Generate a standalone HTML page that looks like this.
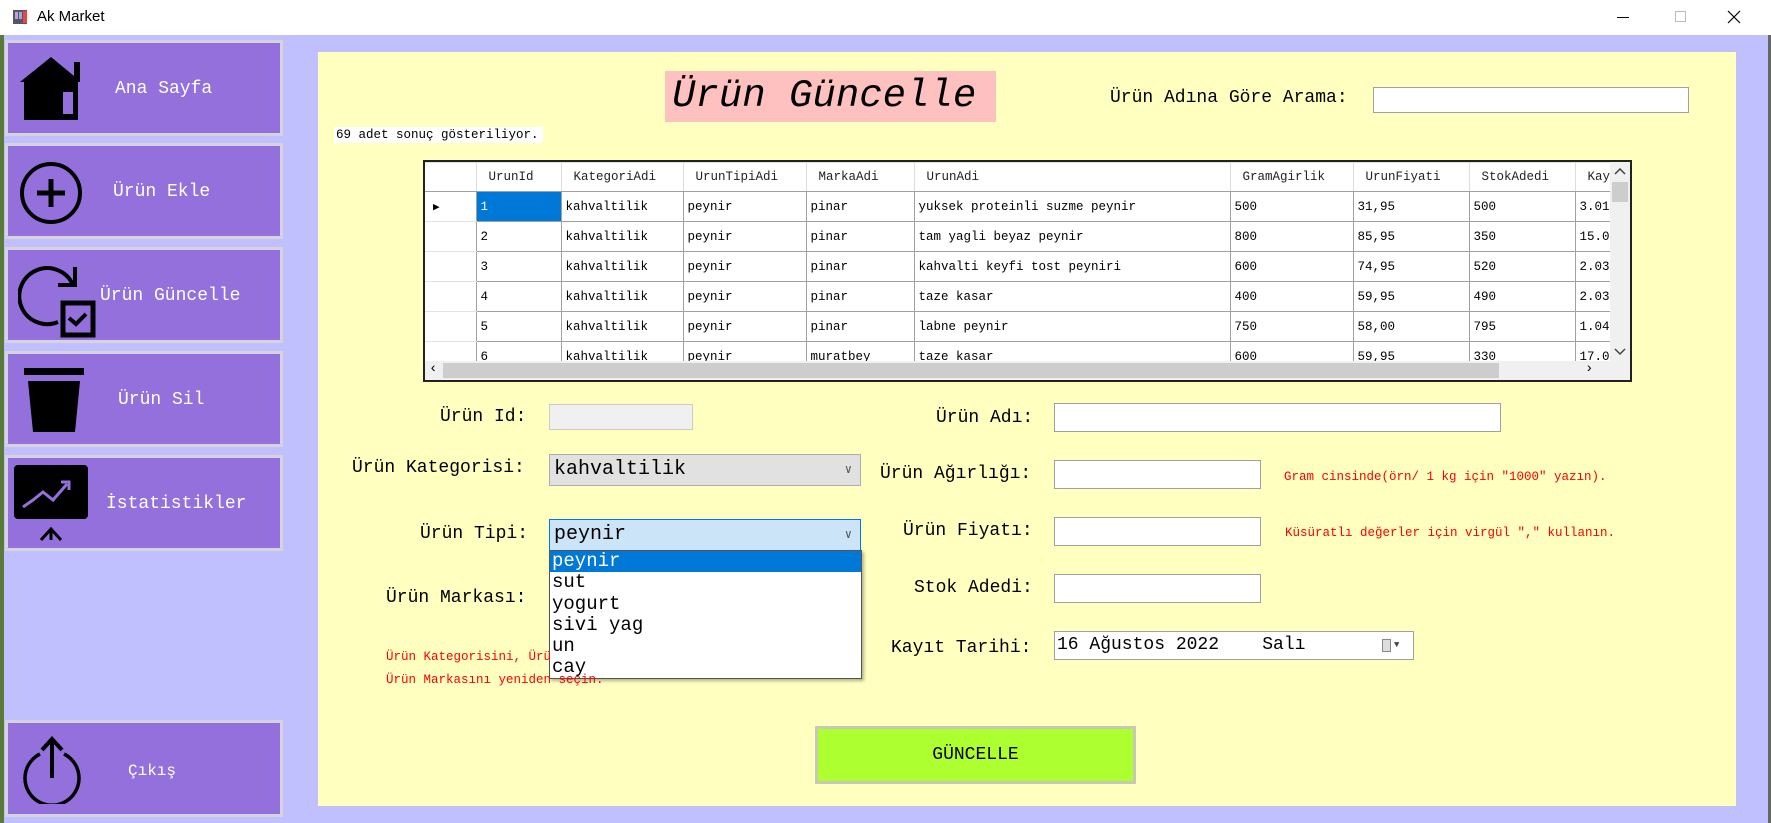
<!DOCTYPE html>
<html><head><meta charset="utf-8"><style>
*{box-sizing:border-box;margin:0;padding:0}
body{width:1771px;height:823px;overflow:hidden;background:#c0c0ff;font-family:"Liberation Mono",monospace;position:relative}
.a{position:absolute}
.tb{left:0;top:0;width:1771px;height:35px;background:#fff;font-family:"Liberation Sans",sans-serif;font-size:15px;color:#000}
.btn{position:absolute;left:5px;width:278px;height:96px;background:#9370db;border:3px solid #d6d3de}
.btn span{position:absolute;color:#fff;font-size:18px;white-space:nowrap;top:36px}
.panel{left:318px;top:52px;width:1418px;height:754px;background:#ffffc0}
.lbl{position:absolute;font-size:18px;color:#000;white-space:nowrap;line-height:22px}
.red{position:absolute;font-size:12.5px;color:#f00;white-space:nowrap;line-height:16px}
.inp{position:absolute;background:#fff;border:1px solid #a0a0a0}
table{border-collapse:collapse;font-size:12.5px;table-layout:fixed}
td{height:30px;border:1px solid #a0a0a0;padding-left:4px;white-space:nowrap;overflow:hidden;background:#fff}
th{height:29px;border:1px solid #ddd;border-bottom:1px solid #a0a0a0;font-weight:normal;text-align:left;padding-left:12px;white-space:nowrap;overflow:hidden;background:#fff;color:#222}
td.rh{border:none;border-bottom:1px solid #e3e3e3;background:#fff}
.dd div{height:21.3px;line-height:21px;font-size:19px;padding-left:2px}
</style></head><body>
<div class="a tb">
 <svg class="a" style="left:13px;top:10px" width="14" height="14"><rect x="0" y="0" width="14" height="14" fill="#556"/><rect x="2" y="2" width="3" height="7" fill="#c9d"/><rect x="6" y="2" width="3" height="7" fill="#9ad"/><rect x="10" y="1" width="4" height="12" fill="#e44"/></svg>
 <div class="a" style="left:37px;top:8px">Ak Market</div>
 <div class="a" style="left:1617px;top:17px;width:12px;height:1px;background:#000"></div>
 <div class="a" style="left:1675px;top:11px;width:11px;height:11px;border:1px solid #bbb"></div>
 <svg class="a" style="left:1727px;top:10px" width="14" height="14"><path d="M1 1L13 13M13 1L1 13" stroke="#000" stroke-width="1.2"/></svg>
</div>
<div class="a" style="left:0;top:35px;width:4px;height:788px;background:#5a7a3a"></div>
<div class="a" style="left:1768px;top:35px;width:3px;height:788px;background:#666"></div>

<div class="btn" style="top:40px">
 <svg class="a" style="left:10px;top:11px" width="66" height="66" viewBox="0 0 66 66"><path d="M2 28L33 3L56 22V8H62V28L66 28L60 28V66H6V28Z" fill="#000"/><rect x="45" y="38" width="10" height="22" fill="#9370db"/></svg>
 <span style="left:107px">Ana Sayfa</span></div>
<div class="btn" style="top:143px">
 <svg class="a" style="left:10px;top:14px" width="66" height="66"><circle cx="33" cy="33" r="29" fill="none" stroke="#000" stroke-width="4"/><path d="M33 19V47M19 33H47" stroke="#000" stroke-width="5"/></svg>
 <span style="left:105px">Ürün Ekle</span></div>
<div class="btn" style="top:247px">
 <svg class="a" style="left:10px;top:10px" width="80" height="80"><path d="M55 25A28 28 0 1 0 40 62" fill="none" stroke="#000" stroke-width="4"/><path d="M57 7V25H40" fill="none" stroke="#000" stroke-width="4"/><rect x="45" y="43" width="30" height="32" fill="none" stroke="#000" stroke-width="5"/><path d="M51 58L58 64L68 54" fill="none" stroke="#000" stroke-width="4"/></svg>
 <span style="left:92px">Ürün Güncelle</span></div>
<div class="btn" style="top:351px">
 <svg class="a" style="left:12px;top:14px" width="66" height="66"><rect x="4" y="0" width="60" height="7" fill="#000"/><path d="M8 13H60L55 64H13Z" fill="#000"/></svg>
 <span style="left:110px">Ürün Sil</span></div>
<div class="btn" style="top:455px">
 <svg class="a" style="left:3px;top:2px" width="80" height="86"><rect x="3" y="5" width="74" height="54" rx="4" fill="#000"/><path d="M12 47L22 40L32 32L42 40L56 24" fill="none" stroke="#9370db" stroke-width="3"/><path d="M50 22H58V30" fill="none" stroke="#9370db" stroke-width="3"/><path d="M30 80L40 69L50 80M40 69V80" fill="none" stroke="#000" stroke-width="3"/></svg>
 <span style="left:98px">İstatistikler</span></div>
<div class="btn" style="top:720px;height:97px;">
 <svg class="a" style="left:10px;top:11px" width="70" height="70"><path d="M22 20A27 27 0 1 0 46 20" fill="none" stroke="#000" stroke-width="3.5"/><path d="M34 44V6M24 16L34 5L44 16" fill="none" stroke="#000" stroke-width="4"/></svg>
 <span style="left:120px;top:39px;font-size:16px">Çıkış</span></div>

<div class="a panel"></div>
<div class="a" style="left:665px;top:71px;width:331px;height:51px;background:#ffc0c0"></div>
<div class="a" style="left:672px;top:74px;font-size:39px;font-style:italic;line-height:45px">Ürün Güncelle</div>
<div class="a" style="left:334px;top:127px;background:#fff;font-size:12.5px;line-height:16px;padding:0 4px 0 2px">69 adet sonuç gösteriliyor.</div>
<div class="lbl" style="left:1110px;top:87px">Ürün Adına Göre Arama:</div>
<div class="inp" style="left:1373px;top:87px;width:316px;height:26px"></div>

<div class="a" style="left:423px;top:160px;width:1209px;height:222px;border:2px solid #222;background:#f0f0f0;overflow:hidden">
<table style="width:1185px">
<colgroup><col style="width:51px"><col style="width:85px"><col style="width:122px"><col style="width:123px"><col style="width:108px"><col style="width:316px"><col style="width:123px"><col style="width:116px"><col style="width:106px"><col style="width:35px"></colgroup>
<tr><th style="border-left:none"></th><th>UrunId</th><th>KategoriAdi</th><th>UrunTipiAdi</th><th>MarkaAdi</th><th>UrunAdi</th><th>GramAgirlik</th><th>UrunFiyati</th><th>StokAdedi</th><th>Kay</th></tr>
<tr><td class="rh" style="padding-left:8px;font-size:11px">&#9654;</td><td style="background:#0078d7;color:#fff">1</td><td>kahvaltilik</td><td>peynir</td><td>pinar</td><td>yuksek proteinli suzme peynir</td><td>500</td><td>31,95</td><td>500</td><td>3.01</td></tr>
<tr><td class="rh"></td><td>2</td><td>kahvaltilik</td><td>peynir</td><td>pinar</td><td>tam yagli beyaz peynir</td><td>800</td><td>85,95</td><td>350</td><td>15.0</td></tr>
<tr><td class="rh"></td><td>3</td><td>kahvaltilik</td><td>peynir</td><td>pinar</td><td>kahvalti keyfi tost peyniri</td><td>600</td><td>74,95</td><td>520</td><td>2.03</td></tr>
<tr><td class="rh"></td><td>4</td><td>kahvaltilik</td><td>peynir</td><td>pinar</td><td>taze kasar</td><td>400</td><td>59,95</td><td>490</td><td>2.03</td></tr>
<tr><td class="rh"></td><td>5</td><td>kahvaltilik</td><td>peynir</td><td>pinar</td><td>labne peynir</td><td>750</td><td>58,00</td><td>795</td><td>1.04</td></tr>
<tr><td class="rh"></td><td>6</td><td>kahvaltilik</td><td>peynir</td><td>muratbey</td><td>taze kasar</td><td>600</td><td>59,95</td><td>330</td><td>17.0</td></tr>
</table>
<div class="a" style="left:0;top:199px;width:1185px;height:19px;background:#f0f0f0"><div class="a" style="left:18px;top:2px;width:1056px;height:15px;background:#cdcdcd"></div><div class="a" style="left:4px;top:0;font-size:14px">‹</div><div class="a" style="left:1160px;top:0;font-size:14px">›</div></div>
<div class="a" style="left:1185px;top:0;width:20px;height:218px;background:#f0f0f0"><div class="a" style="left:2px;top:20px;width:16px;height:20px;background:#cdcdcd"></div>
<svg class="a" style="left:4px;top:6px" width="12" height="8"><path d="M1 6L6 1L11 6" fill="none" stroke="#444" stroke-width="1.5"/></svg>
<svg class="a" style="left:4px;top:186px" width="12" height="8"><path d="M1 1L6 6L11 1" fill="none" stroke="#444" stroke-width="1.5"/></svg></div>
</div>

<div class="lbl" style="left:440px;top:406px">Ürün Id:</div>
<div class="inp" style="left:549px;top:404px;width:144px;height:26px;background:#f0f0f0;border-color:#ccc"></div>
<div class="lbl" style="left:352px;top:457px">Ürün Kategorisi:</div>
<div class="a" style="left:549px;top:454px;width:312px;height:32px;background:#e1e1e1;border:1px solid #adadad;font-size:20px;line-height:30px;padding-left:4px">kahvaltilik<span class="a" style="right:8px;top:0;font-size:12px;color:#555">&#8744;</span></div>
<div class="lbl" style="left:420px;top:523px">Ürün Tipi:</div>
<div class="a" style="left:549px;top:519px;width:312px;height:32px;background:#cce4f7;border:1px solid #0078d7;font-size:20px;line-height:30px;padding-left:4px">peynir<span class="a" style="right:8px;top:0;font-size:12px;color:#555">&#8744;</span></div>
<div class="a dd" style="left:549px;top:550px;width:313px;height:129px;background:#fff;border:1px solid #555;box-shadow:2px 2px 3px rgba(0,0,0,.3)">
<div style="background:#0078d7;color:#fff">peynir</div><div>sut</div><div>yogurt</div><div>sivi yag</div><div>un</div><div>cay</div></div>
<div class="lbl" style="left:386px;top:587px">Ürün Markası:</div>
<div class="red" style="left:386px;top:649px">Ürün Kategorisini, Ürü</div>
<div class="red" style="left:386px;top:672px">Ürün Markasını yeniden seçin.</div>

<div class="lbl" style="left:936px;top:407px">Ürün Adı:</div>
<div class="inp" style="left:1054px;top:403px;width:447px;height:29px"></div>
<div class="lbl" style="left:880px;top:463px">Ürün Ağırlığı:</div>
<div class="inp" style="left:1054px;top:460px;width:207px;height:29px"></div>
<div class="red" style="left:1284px;top:469px">Gram cinsinde(örn/ 1 kg için "1000" yazın).</div>
<div class="lbl" style="left:903px;top:520px">Ürün Fiyatı:</div>
<div class="inp" style="left:1054px;top:517px;width:207px;height:29px"></div>
<div class="red" style="left:1285px;top:525px">Küsüratlı değerler için virgül "," kullanın.</div>
<div class="lbl" style="left:914px;top:577px">Stok Adedi:</div>
<div class="inp" style="left:1054px;top:574px;width:207px;height:29px"></div>
<div class="lbl" style="left:891px;top:637px">Kayıt Tarihi:</div>
<div class="inp" style="left:1054px;top:631px;width:360px;height:29px;font-size:18px;line-height:27px;padding-left:2px;white-space:pre">16 Ağustos 2022    Salı<span class="a" style="left:327px;top:7px;width:9px;height:13px;border:1px solid #888;background:#ddd"></span><span class="a" style="left:339px;top:0;font-size:9px;color:#444">▼</span></div>

<div class="a" style="left:815px;top:726px;width:321px;height:58px;background:#adff2f;border:3px solid #c8c8b8;font-size:18px;line-height:52px;text-align:center">GÜNCELLE</div>
</body></html>
